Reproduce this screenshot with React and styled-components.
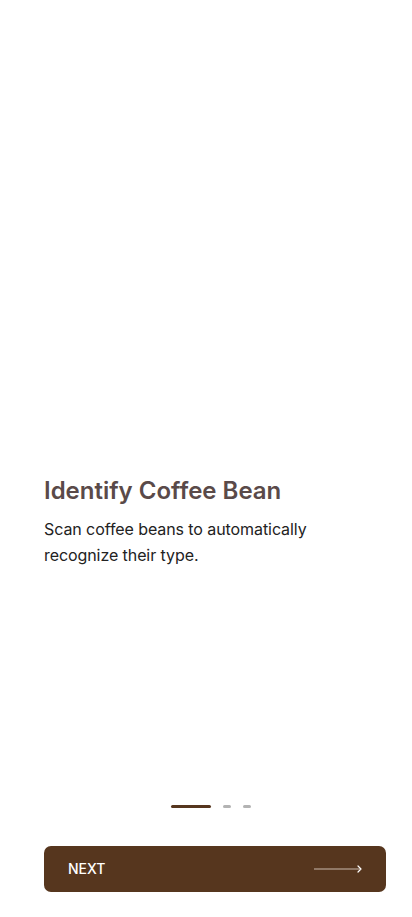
import React, { useState } from "react";
import styled, { createGlobalStyle } from "styled-components";

const Global = createGlobalStyle`
  html, body {
    margin: 0;
    padding: 0;
    background: #fff;
  }
  * { box-sizing: border-box; }
`;

const Screen = styled.div`
  height: 917px;
  display: flex;
  flex-direction: column;
  padding: 0 26px 25px 44px;
  font-family: Inter, "Noto Sans", sans-serif;
  background: #fff;
`;

const Intro = styled.div`
  padding-top: 476px;
  flex: 1;
`;

const Title = styled.h1`
  margin: 0;
  font-size: 24px;
  line-height: 30px;
  font-weight: 600;
  color: #5a4a49;
`;

const Text = styled.p`
  margin: 10px 0 0;
  max-width: 290px;
  font-size: 16px;
  line-height: 26px;
  font-weight: 400;
  letter-spacing: -0.08px;
  color: #222;
`;

const Dots = styled.div`
  display: flex;
  align-items: center;
  gap: 12px;
  margin: 0 0 38px 127px;
`;

const Dot = styled.span`
  display: block;
  width: ${(p) => (p.active ? "40px" : "8px")};
  height: 3px;
  border-radius: 2px;
  background: ${(p) => (p.active ? "#56361e" : "#b3b3b3")};
`;

const NextButton = styled.button`
  height: 46px;
  width: 100%;
  display: flex;
  align-items: center;
  justify-content: space-between;
  padding: 0 23px 0 24px;
  border: none;
  border-radius: 7px;
  background: #56361e;
  color: #fff;
  font: 500 14px/14px Inter, "Noto Sans", sans-serif;
  cursor: pointer;
`;

export default function App() {
  const [step, setStep] = useState(0);

  return (
    <Screen>
      <Global />
      <Intro>
        <Title>Identify Coffee Bean</Title>
        <Text>Scan coffee beans to automatically recognize their type.</Text>
      </Intro>
      <Dots>
        {[0, 1, 2].map((i) => (
          <Dot key={i} active={i === step} />
        ))}
      </Dots>
      <NextButton onClick={() => setStep((step + 1) % 3)}>
        <span>NEXT</span>
        <svg width="50" height="10" viewBox="0 0 50 10" fill="none">
          <path d="M1 5h47" stroke="#c9b9ad" strokeWidth="1.2" />
          <path d="M45 2l3 3-3 3" stroke="#fff" strokeWidth="1.2" strokeLinecap="round" strokeLinejoin="round" />
        </svg>
      </NextButton>
    </Screen>
  );
}
